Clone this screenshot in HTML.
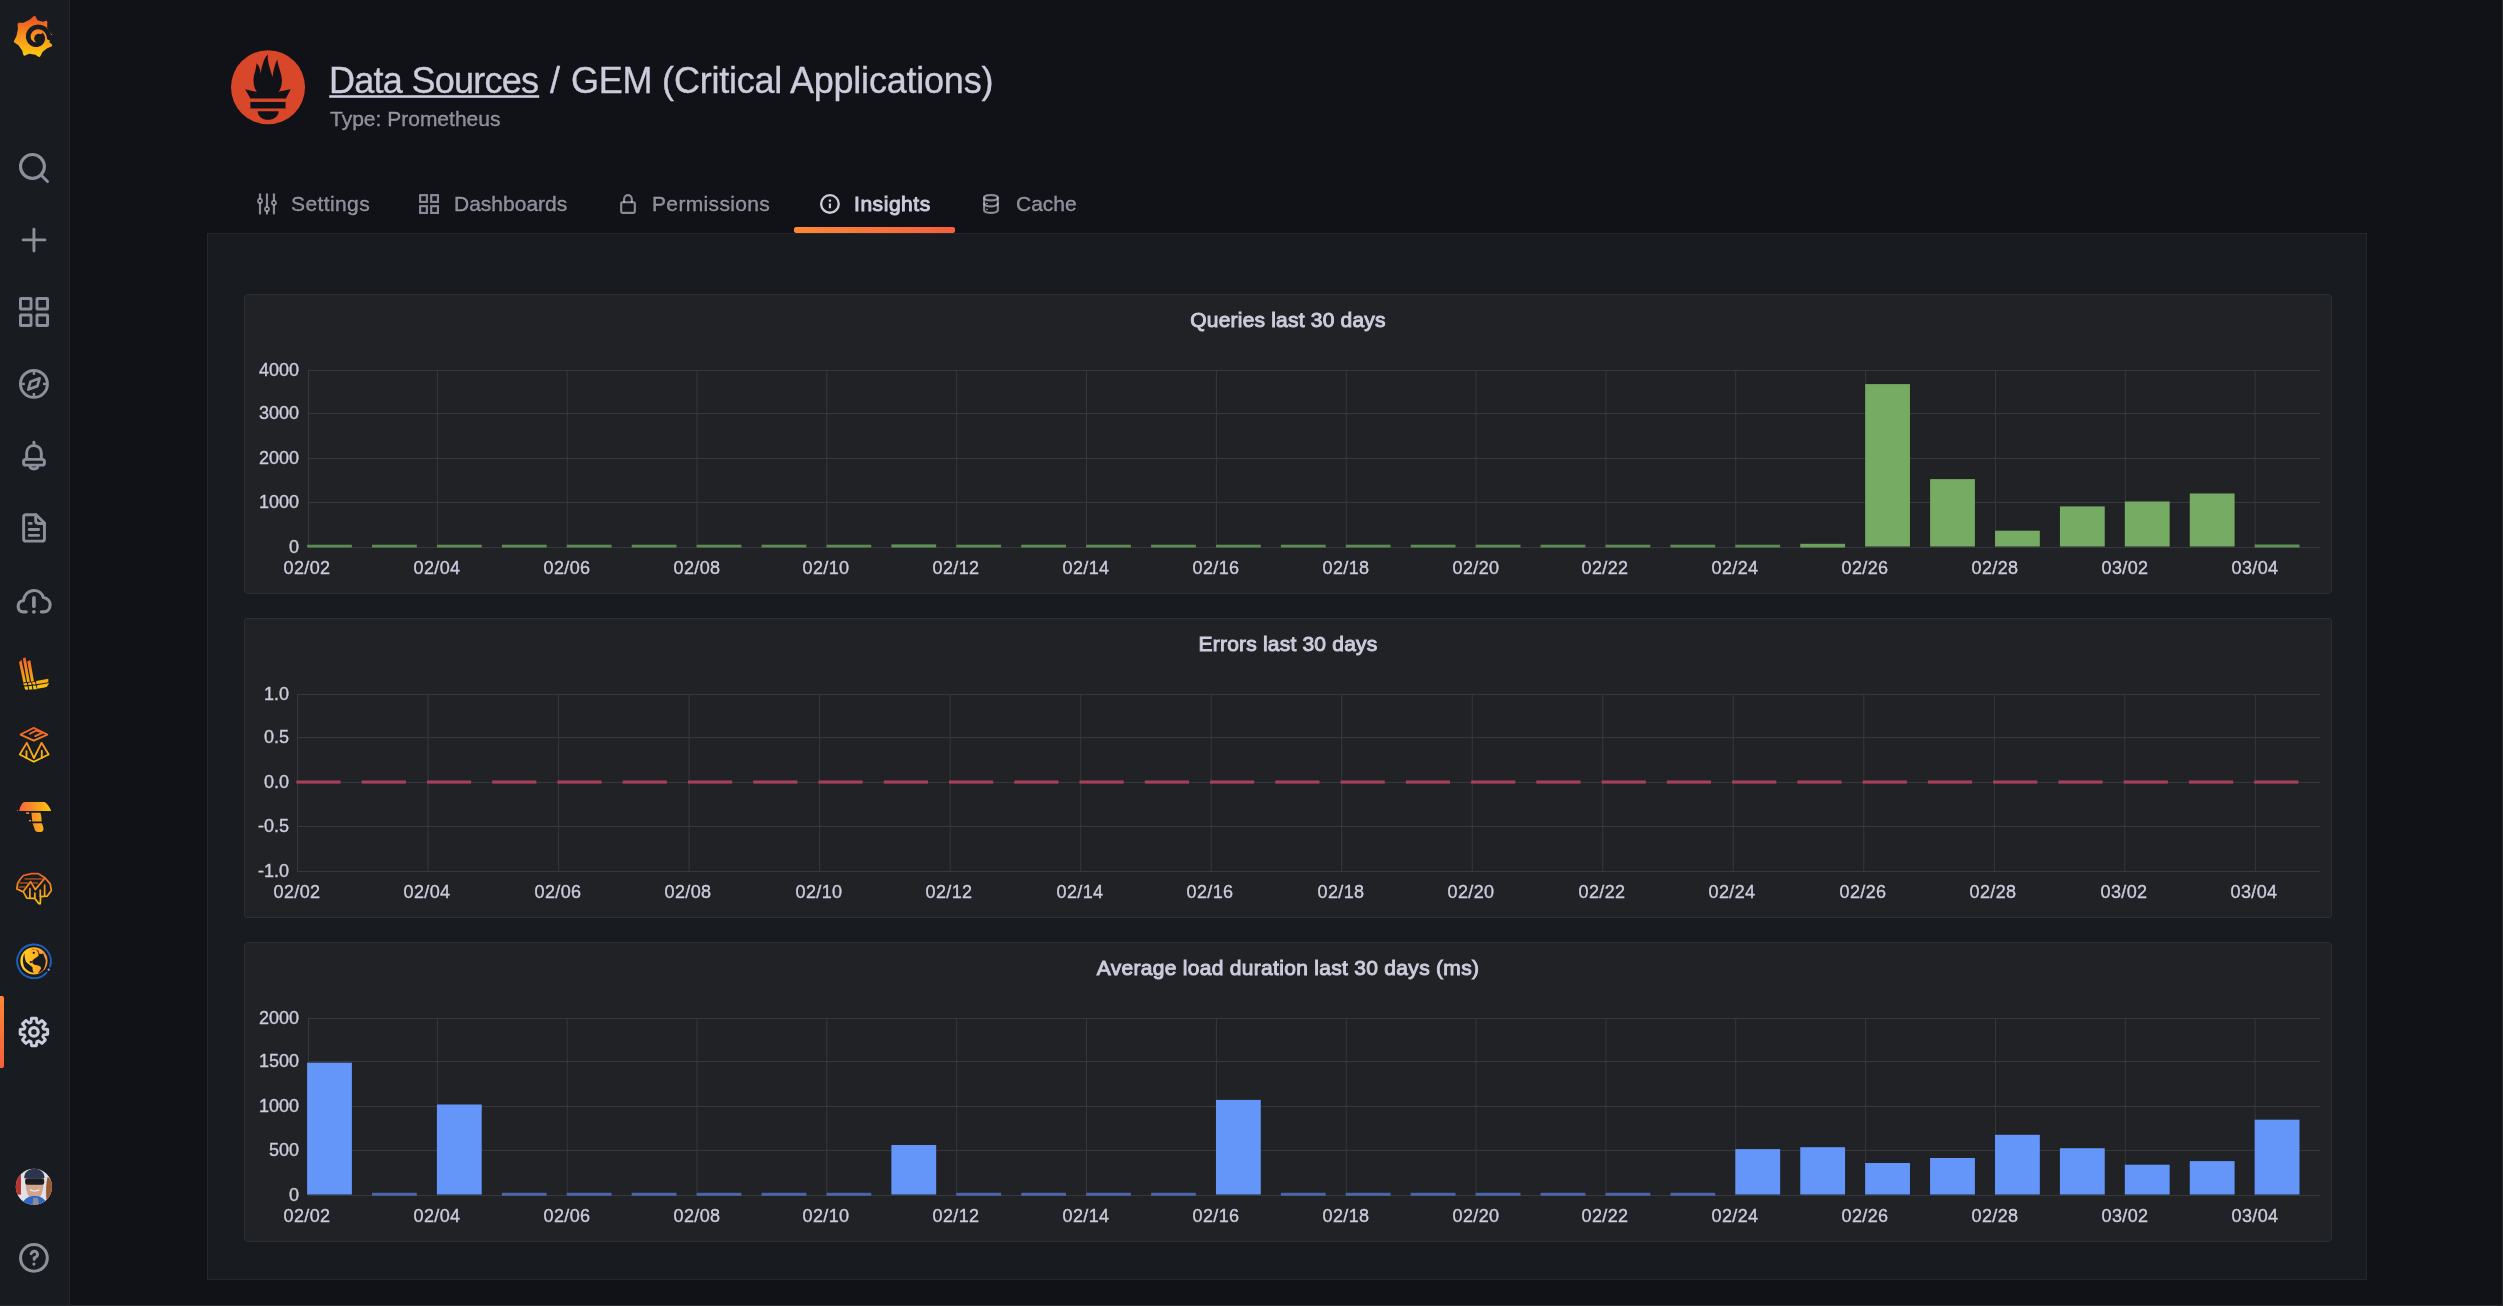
<!DOCTYPE html><html><head><meta charset="utf-8"><style>
html,body{margin:0;padding:0;}
body{width:2503px;height:1306px;overflow:hidden;background:#111217;position:relative;font-family:"Liberation Sans",sans-serif;}
.t{position:absolute;white-space:nowrap;will-change:transform;}
.r{position:absolute;}
svg{position:absolute;overflow:visible;}
</style></head><body>
<div class="r" style="left:2502px;top:0px;width:1px;height:1306px;background:#26282c;"></div>
<div class="r" style="left:0px;top:1305px;width:2503px;height:1px;background:#2a2c30;"></div>
<div class="r" style="left:0px;top:0px;width:69px;height:1305px;background:#181b1f;"></div>
<div class="r" style="left:69px;top:0px;width:1px;height:1305px;background:#24272b;"></div>
<div class="r" style="left:0px;top:996px;width:4px;height:72px;background:linear-gradient(180deg,#FF8833,#F55F3E);border-radius:0 2px 2px 0;"></div>
<svg style="left:10px;top:12px;" width="48" height="48" viewBox="0 0 1306 1306">
<defs><linearGradient id="glg" gradientUnits="userSpaceOnUse" x1="0" y1="1200" x2="0" y2="110">
<stop offset="0" stop-color="#FBCA0A"/><stop offset="0.5" stop-color="#F7921E"/><stop offset="1" stop-color="#EE4E24"/></linearGradient></defs>
<path fill="url(#glg)" stroke="url(#glg)" stroke-width="70" stroke-linejoin="round" d="M243 329 L394 319 L480 275 L567 232 L666 140 L723 251 L809 276 L895 304 L982 274 L974 431 L1013 500 L1051 571 L1130 652 L1067 681 L1051 759 L1034 837 L1113 906 L999 952 L930 1005 L861 1057 L794 1191 L703 1127 L611 1113 L520 1096 L396 1154 L364 1032 L306 952 L249 872 L139 803 L206 673 L227 576 L250 479 Z"/>
<path d="M1210 720 L1090 680 L1068 704 L1060 647 L1042 593 L1016 544 L982 501 L942 465 L897 438 L849 418 L798 408 L748 407 L699 415 L653 430 L611 454 L575 483 L545 518 L522 557 L506 598 L498 641 L498 684 L505 725 L519 763 L539 798 L565 827 L594 852 L627 870 L661 882 L696 888 L731 887 L764 880 L795 868 L823 851 L846 830 L864 806 L878 779 L886 752 L890 724 L888 697 L882 672 L871 649 L857 629 L840 612" fill="none" stroke="#181b1f" stroke-width="128" stroke-linejoin="round"/>
<circle cx="785" cy="722" r="128" fill="#181b1f"/>
<path d="M1040 600 L1200 655 L1185 775 L1080 770 Z" fill="#181b1f"/>
</svg>
<svg style="left:18px;top:152px;" width="32" height="32" viewBox="0 0 1306 1306"><g fill="none" stroke="#8e8f9b" stroke-linecap="round" stroke-linejoin="round"><circle cx="590" cy="590" r="487" stroke-width="128"/><line x1="960" y1="960" x2="1205" y2="1205" stroke-width="115"/></g></svg>
<svg style="left:18px;top:224px;" width="32" height="32" viewBox="0 0 1306 1306"><g fill="none" stroke="#8e8f9b" stroke-linecap="round" stroke-linejoin="round"><line x1="650" y1="210" x2="650" y2="1100" stroke-width="118"/><line x1="210" y1="650" x2="1100" y2="650" stroke-width="118"/></g></svg>
<svg style="left:18px;top:296px;" width="32" height="32" viewBox="0 0 1306 1306"><g fill="none" stroke="#8e8f9b" stroke-linecap="round" stroke-linejoin="round"><g stroke-width="118"><rect x="100" y="100" width="432" height="432" rx="25"/><rect x="774" y="100" width="432" height="432" rx="25"/><rect x="100" y="774" width="432" height="432" rx="25"/><rect x="774" y="774" width="432" height="432" rx="25"/></g></g></svg>
<svg style="left:18px;top:368px;" width="32" height="32" viewBox="0 0 1306 1306"><g fill="none" stroke="#8e8f9b" stroke-linecap="round" stroke-linejoin="round"><circle cx="650" cy="650" r="550" stroke-width="120"/><g stroke-width="100" stroke-linecap="butt"><line x1="650" y1="140" x2="650" y2="280"/><line x1="650" y1="1020" x2="650" y2="1160"/><line x1="140" y1="650" x2="280" y2="650"/><line x1="1020" y1="650" x2="1160" y2="650"/></g><path d="M880 420 L790 740 L420 880 L510 560 Z" stroke-width="110"/></g></svg>
<svg style="left:18px;top:440px;" width="32" height="32" viewBox="0 0 1306 1306"><g fill="none" stroke="#8e8f9b" stroke-linecap="round" stroke-linejoin="round"><g stroke-width="120"><line x1="650" y1="95" x2="650" y2="150"/><path d="M355 730 V520 C355 340 490 230 650 230 C810 230 950 340 950 520 V730"/><rect x="228" y="790" width="850" height="235" rx="90"/><path d="M480 1040 C490 1150 560 1185 650 1185 C740 1185 810 1150 820 1040"/></g></g></svg>
<svg style="left:18px;top:512px;" width="32" height="32" viewBox="0 0 1306 1306"><g fill="none" stroke="#8e8f9b" stroke-linecap="round" stroke-linejoin="round"><g stroke-width="118"><path d="M740 110 H330 C270 110 230 150 230 210 V1090 C230 1150 270 1190 330 1190 H980 C1040 1190 1080 1150 1080 1090 V450 Z"/><path d="M720 120 V350 C720 420 770 470 840 470 H1070"/><line x1="460" y1="465" x2="540" y2="465"/><line x1="460" y1="715" x2="840" y2="715"/><line x1="460" y1="955" x2="840" y2="955"/></g></g></svg>
<svg style="left:14px;top:582px;" width="40" height="40" viewBox="0 0 1306 1306"><g fill="none" stroke="#8e8f9b" stroke-linecap="round" stroke-linejoin="round"><g stroke-width="100"><path d="M400 975 H290 C190 965 135 880 135 780 C135 670 215 610 305 615 C325 430 465 275 650 275 C800 275 920 375 960 505 C1090 525 1180 625 1180 745 C1180 875 1090 975 960 975 H890"/><line x1="650" y1="520" x2="650" y2="790" stroke-width="120"/></g><circle cx="650" cy="975" r="62" fill="#8e8f9b" stroke="none"/></g></svg>
<svg style="left:10px;top:648px;" width="50" height="50" viewBox="0 0 1306 1306"><defs><linearGradient id="lk" gradientUnits="userSpaceOnUse" x1="0" y1="200" x2="0" y2="1100"><stop offset="0" stop-color="#F05A28"/><stop offset="1" stop-color="#FBCA0A"/></linearGradient></defs>
<g fill="url(#lk)">
<path d="M235 370 L300 310 L420 890 L348 900 Z"/>
<path d="M335 275 L405 240 L520 880 L447 890 Z"/>
<path d="M450 355 L530 315 L625 870 L553 880 Z"/>
<path d="M345 925 L655 880 L700 1075 L400 1090 Z"/>
<path d="M680 860 L1000 800 L1000 895 L690 950 Z"/>
<path d="M700 975 L1020 915 C990 990 960 1020 900 1035 L710 1065 Z"/>
</g>
<g stroke="#181b1f" stroke-width="28"><line x1="330" y1="995" x2="720" y2="960"/><line x1="455" y1="900" x2="490" y2="1100"/><line x1="565" y1="890" x2="600" y2="1090"/></g>
</svg>
<svg style="left:10px;top:720px;" width="50" height="50" viewBox="0 0 1306 1306"><defs><linearGradient id="mm" gradientUnits="userSpaceOnUse" x1="0" y1="200" x2="0" y2="1100"><stop offset="0" stop-color="#F05A28"/><stop offset="1" stop-color="#FBCA0A"/></linearGradient></defs>
<g fill="none" stroke="url(#mm)" stroke-width="48" stroke-linejoin="round" stroke-linecap="round">
<path d="M275 380 L620 205 L975 380 L620 540 Z"/>
<path d="M520 360 L690 275 L860 330 L660 420"/>
<path d="M255 900 L440 595 L625 995 L825 595 L1010 900 L620 1090 Z"/>
<line x1="430" y1="815" x2="430" y2="990"/><line x1="830" y1="800" x2="830" y2="985"/>
</g></svg>
<svg style="left:10px;top:792px;" width="50" height="50" viewBox="0 0 1306 1306"><defs><linearGradient id="tp" gradientUnits="userSpaceOnUse" x1="200" y1="0" x2="1080" y2="0"><stop offset="0" stop-color="#F55F3E"/><stop offset="1" stop-color="#FBCA0A"/></linearGradient></defs>
<g fill="url(#tp)">
<path d="M240 495 C255 390 320 260 385 260 L900 260 C960 280 1040 400 1075 495 Z"/>
<path d="M560 540 L790 540 C815 580 830 700 822 770 L580 770 Z"/>
<path d="M590 815 L830 815 C855 860 885 950 872 995 C860 1035 830 1048 780 1048 L720 1048 C660 1040 640 985 630 930 Z"/>
<rect x="420" y="530" width="80" height="42"/><rect x="495" y="730" width="55" height="38"/><circle cx="195" cy="485" r="16"/>
</g></svg>
<svg style="left:10px;top:864px;" width="50" height="50" viewBox="0 0 1306 1306"><defs><linearGradient id="br" gradientUnits="userSpaceOnUse" x1="0" y1="200" x2="0" y2="1100"><stop offset="0" stop-color="#F05A28"/><stop offset="1" stop-color="#FBCA0A"/></linearGradient></defs>
<g fill="none" stroke="url(#br)" stroke-width="45" stroke-linejoin="round" stroke-linecap="round">
<path d="M350 300 L560 250 L730 250 L910 360 L1050 520 L1080 690 L970 840 L800 850 L790 1040 L750 1030 L650 900 L440 890 L350 730 L180 650 L200 500 L280 380 Z"/>
<path d="M360 700 L540 460 L660 670 L910 370"/>
<line x1="520" y1="640" x2="520" y2="870"/><line x1="650" y1="760" x2="650" y2="880"/><line x1="790" y1="680" x2="790" y2="850"/><line x1="905" y1="550" x2="905" y2="820"/>
</g>
<g stroke="#B5561F" stroke-width="40" opacity="0.85"><line x1="380" y1="390" x2="860" y2="390"/><line x1="240" y1="495" x2="480" y2="495"/><line x1="580" y1="495" x2="730" y2="495"/><line x1="230" y1="600" x2="400" y2="600"/></g>
</svg>
<svg style="left:10px;top:936px;" width="50" height="50" viewBox="0 0 1306 1306"><defs><linearGradient id="gb" gradientUnits="userSpaceOnUse" x1="270" y1="0" x2="980" y2="0"><stop offset="0" stop-color="#FFD21A"/><stop offset="1" stop-color="#FF9428"/></linearGradient></defs>
<path d="M1045 800 A 440 440 0 1 0 955 955" fill="none" stroke="#1F60C4" stroke-width="48" stroke-linecap="round"/>
<circle cx="1010" cy="880" r="30" fill="#8AB8FF"/>
<circle cx="625" cy="650" r="355" fill="url(#gb)"/>
<g fill="#181b1f">
<path d="M380 460 C330 540 320 700 380 820 C440 900 540 950 620 960 C600 900 580 860 590 820 C560 780 470 740 420 680 C390 620 380 540 380 460 Z"/>
<path d="M550 350 C600 340 650 350 700 370 C740 420 760 480 740 520 C700 560 640 580 590 640 C560 700 600 740 680 760 C760 770 820 800 810 850 C790 900 760 940 730 960 C800 960 870 900 900 820 C930 740 940 660 930 620 C910 560 880 500 870 460 C840 470 800 480 760 460 C750 420 760 380 700 360 Z"/>
<circle cx="620" cy="440" r="30"/><circle cx="545" cy="680" r="30"/>
</g></svg>
<svg style="left:18px;top:1016px;" width="32" height="32" viewBox="0 0 1306 1306"><g fill="none" stroke="rgb(204,204,220)" stroke-linecap="round" stroke-linejoin="round"><path d="M530 258 L551 89 L749 89 L770 258 L842 288 L977 183 L1117 323 L1012 458 L1042 530 L1211 551 L1211 749 L1042 770 L1012 842 L1117 977 L977 1117 L842 1012 L770 1042 L749 1211 L551 1211 L530 1042 L458 1012 L323 1117 L183 977 L288 842 L258 770 L89 749 L89 551 L258 530 L288 458 L183 323 L323 183 L458 288 Z" stroke-width="120"/><circle cx="650" cy="650" r="175" stroke-width="130"/></g></svg>
<svg style="left:0px;top:1140px;" width="70" height="166" viewBox="0 0 551 1306">
<defs><clipPath id="avc"><circle cx="267" cy="368" r="143"/></clipPath></defs>
<g clip-path="url(#avc)">
<rect x="100" y="200" width="350" height="350" fill="#dfe2e6"/>
<rect x="110" y="260" width="55" height="170" fill="#b8322e"/>
<path d="M375 290 C395 300 420 330 415 380 L415 470 L365 470 C360 400 362 330 375 290 Z" fill="#9a5a34"/>
<path d="M190 300 C190 240 240 225 270 225 C310 225 350 245 350 300 Z" fill="#2c3550"/>
<path d="M200 300 C200 430 235 470 270 470 C310 470 345 430 345 300 Z" fill="#cfa58e"/>
<rect x="198" y="300" width="150" height="52" rx="18" fill="#1b1c20"/>
<path d="M235 390 C255 405 290 405 310 390" stroke="#ece6e2" stroke-width="10" fill="none"/>
<path d="M160 560 C165 470 220 440 270 440 C330 440 375 470 380 560 Z" fill="#2f66c8"/>
<path d="M262 455 L298 455 L310 520 L255 520 Z" fill="#8b8d95"/>
</g></svg>
<svg style="left:18px;top:1242px;" width="32" height="32" viewBox="0 0 1306 1306"><g fill="none" stroke="#8e8f9b" stroke-linecap="round" stroke-linejoin="round"><circle cx="650" cy="650" r="545" stroke-width="125"/><path d="M535 480 C565 410 615 375 665 375 C745 375 800 435 800 510 C800 590 730 625 660 650 V715" stroke-width="118"/><circle cx="650" cy="900" r="65" fill="#8e8f9b" stroke="none"/></g></svg>
<svg style="left:225px;top:45px;" width="85" height="85" viewBox="0 0 1306 1306">
<circle cx="661" cy="650" r="569" fill="#D9472B"/>
<g fill="#111217">
<path d="M310 680 C380 700 450 715 490 718 C430 640 425 520 460 420 C475 360 482 310 485 280 C525 320 548 385 545 450 C570 300 605 185 660 145 C645 250 700 380 730 495 C742 400 772 280 805 220 C805 320 880 440 875 560 C870 640 845 690 822 718 C880 705 950 690 1010 680 L935 822 L390 822 Z"/>
<rect x="390" y="875" width="540" height="100"/>
<path d="M500 1018 L825 1018 C820 1100 750 1150 662 1150 C575 1150 505 1100 500 1018 Z"/>
</g></svg>
<div class="t" style="left:328.5px;top:62.81px;font-size:36px;line-height:36px;color:rgb(204,204,220);-webkit-text-stroke:0.35px rgb(204,204,220);letter-spacing:-0.73px;">Data Sources</div>
<div class="t" style="left:549.5px;top:62.81px;font-size:36px;line-height:36px;color:rgb(204,204,220);-webkit-text-stroke:0.35px rgb(204,204,220);letter-spacing:0px;">/</div>
<div class="t" style="left:570.7px;top:62.81px;font-size:36px;line-height:36px;color:rgb(204,204,220);-webkit-text-stroke:0.35px rgb(204,204,220);letter-spacing:-0.22px;">GEM (Critical Applications)</div>
<svg style="left:0px;top:0px;" width="1100" height="200" viewBox="0 0 1100 200"><rect x="329.2" y="95.2" width="210" height="2.6" fill="rgb(204,204,220)"/></svg>
<div class="t" style="left:330px;top:108.21px;font-size:21px;line-height:21px;color:rgba(204,204,220,0.65);-webkit-text-stroke:0.3px rgba(204,204,220,0.65);letter-spacing:0px;">Type: Prometheus</div>
<svg style="left:254px;top:190px;" width="28" height="28" viewBox="0 0 1306 1306"><g fill="none" stroke="rgba(204,204,220,0.65)" stroke-linecap="round" stroke-linejoin="round"><g stroke-width="100"><line x1="280" y1="200" x2="280" y2="1100"/><line x1="605" y1="200" x2="605" y2="1100"/><line x1="930" y1="200" x2="930" y2="1100"/></g><g stroke-width="82" fill="#111217"><circle cx="280" cy="510" r="95"/><circle cx="605" cy="890" r="95"/><circle cx="930" cy="600" r="95"/></g></g></svg>
<div class="t" style="left:290.5px;top:193.21px;font-size:21px;line-height:21px;color:rgba(204,204,220,0.65);-webkit-text-stroke:0.3px rgba(204,204,220,0.65);letter-spacing:0.4px;">Settings</div>
<svg style="left:415px;top:190px;" width="28" height="28" viewBox="0 0 1306 1306"><g fill="none" stroke="rgba(204,204,220,0.65)" stroke-linecap="round" stroke-linejoin="round"><g stroke-width="100" stroke-linejoin="miter"><rect x="240" y="240" width="315" height="315"/><rect x="755" y="240" width="315" height="315"/><rect x="240" y="755" width="315" height="315"/><rect x="755" y="755" width="315" height="315"/></g></g></svg>
<div class="t" style="left:453.5px;top:193.21px;font-size:21px;line-height:21px;color:rgba(204,204,220,0.65);-webkit-text-stroke:0.3px rgba(204,204,220,0.65);letter-spacing:0px;">Dashboards</div>
<svg style="left:614px;top:190px;" width="28" height="28" viewBox="0 0 1306 1306"><g fill="none" stroke="rgba(204,204,220,0.65)" stroke-linecap="round" stroke-linejoin="round"><g stroke-width="98"><rect x="335" y="568" width="637" height="497" rx="60"/><path d="M470 560 V430 C470 310 560 238 650 238 C740 238 830 310 830 430 V560"/></g></g></svg>
<div class="t" style="left:652.3px;top:193.21px;font-size:21px;line-height:21px;color:rgba(204,204,220,0.65);-webkit-text-stroke:0.3px rgba(204,204,220,0.65);letter-spacing:0.35px;">Permissions</div>
<svg style="left:816px;top:190px;" width="28" height="28" viewBox="0 0 1306 1306"><g fill="none" stroke="rgb(204,204,220)" stroke-linecap="round" stroke-linejoin="round"><circle cx="650" cy="650" r="410" stroke-width="110"/><line x1="650" y1="680" x2="650" y2="800" stroke-width="100" stroke-linecap="square"/><rect x="598" y="448" width="104" height="104" rx="25" fill="rgb(204,204,220)" stroke="none"/></g></svg>
<div class="t" style="left:853.7px;top:193.21px;font-size:21px;line-height:21px;color:rgb(204,204,220);-webkit-text-stroke:0.95px rgb(204,204,220);letter-spacing:0.55px;">Insights</div>
<svg style="left:977px;top:190px;" width="28" height="28" viewBox="0 0 1306 1306"><g fill="none" stroke="rgba(204,204,220,0.65)" stroke-linecap="round" stroke-linejoin="round"><g stroke-width="98"><ellipse cx="650" cy="360" rx="320" ry="125"/><path d="M332 360 V960 C380 1030 500 1068 650 1068 C800 1068 920 1030 972 960 V360"/><path d="M332 640 C380 720 500 765 650 765 C800 765 920 720 972 640"/></g><g stroke-width="55"><line x1="445" y1="625" x2="485" y2="625"/><line x1="445" y1="905" x2="485" y2="905"/></g></g></svg>
<div class="t" style="left:1015.5px;top:193.21px;font-size:21px;line-height:21px;color:rgba(204,204,220,0.65);-webkit-text-stroke:0.3px rgba(204,204,220,0.65);letter-spacing:0px;">Cache</div>
<div class="r" style="left:794px;top:227px;width:161px;height:6px;background:linear-gradient(90deg,#FF8833,#F55F3E);border-radius:3px;"></div>
<div class="r" style="left:207px;top:233px;width:2160px;height:1047px;background:#181b1f;box-sizing:border-box;border:1px solid #24272b;"></div>
<div class="r" style="left:794px;top:227px;width:161px;height:6px;background:linear-gradient(90deg,#FF8833,#F55F3E);border-radius:3px;"></div>
<div class="r" style="left:244px;top:294px;width:2088px;height:300px;background:#202226;box-sizing:border-box;border:1px solid #2d2f34;border-radius:3px;"></div>
<div class="t" style="left:988px;width:600px;text-align:center;top:309.31px;font-size:21px;line-height:21px;color:rgb(204,204,220);-webkit-text-stroke:0.95px rgb(204,204,220);letter-spacing:0.2px;">Queries last 30 days</div>
<svg style="left:0;top:0" width="2503" height="1306" viewBox="0 0 2503 1306"><g shape-rendering="crispEdges"><rect x="308" y="370" width="2012" height="1" fill="#37383d"/><rect x="308" y="413" width="2012" height="1" fill="#37383d"/><rect x="308" y="458" width="2012" height="1" fill="#37383d"/><rect x="308" y="502" width="2012" height="1" fill="#37383d"/><rect x="308" y="547" width="2012" height="1" fill="#37383d"/></g><g><rect x="308.00" y="370" width="1" height="177" fill="#37383d"/><rect x="436.84" y="370" width="1" height="177" fill="#37383d"/><rect x="566.68" y="370" width="1" height="177" fill="#37383d"/><rect x="696.52" y="370" width="1" height="177" fill="#37383d"/><rect x="826.36" y="370" width="1" height="177" fill="#37383d"/><rect x="956.20" y="370" width="1" height="177" fill="#37383d"/><rect x="1086.04" y="370" width="1" height="177" fill="#37383d"/><rect x="1215.88" y="370" width="1" height="177" fill="#37383d"/><rect x="1345.72" y="370" width="1" height="177" fill="#37383d"/><rect x="1475.56" y="370" width="1" height="177" fill="#37383d"/><rect x="1605.40" y="370" width="1" height="177" fill="#37383d"/><rect x="1735.24" y="370" width="1" height="177" fill="#37383d"/><rect x="1865.08" y="370" width="1" height="177" fill="#37383d"/><rect x="1994.92" y="370" width="1" height="177" fill="#37383d"/><rect x="2124.76" y="370" width="1" height="177" fill="#37383d"/><rect x="2254.60" y="370" width="1" height="177" fill="#37383d"/><rect x="307.10" y="544.70" width="44.8" height="2.80" fill="#5c8a53"/><rect x="372.02" y="544.70" width="44.8" height="2.80" fill="#5c8a53"/><rect x="436.94" y="544.70" width="44.8" height="2.80" fill="#5c8a53"/><rect x="501.86" y="544.70" width="44.8" height="2.80" fill="#5c8a53"/><rect x="566.78" y="544.70" width="44.8" height="2.80" fill="#5c8a53"/><rect x="631.70" y="544.70" width="44.8" height="2.80" fill="#5c8a53"/><rect x="696.62" y="544.70" width="44.8" height="2.80" fill="#5c8a53"/><rect x="761.54" y="544.70" width="44.8" height="2.80" fill="#5c8a53"/><rect x="826.46" y="544.70" width="44.8" height="2.80" fill="#5c8a53"/><rect x="891.38" y="544.40" width="44.8" height="3.10" fill="#5f9056"/><rect x="956.30" y="544.70" width="44.8" height="2.80" fill="#5c8a53"/><rect x="1021.22" y="544.70" width="44.8" height="2.80" fill="#5c8a53"/><rect x="1086.14" y="544.70" width="44.8" height="2.80" fill="#5c8a53"/><rect x="1151.06" y="544.70" width="44.8" height="2.80" fill="#5c8a53"/><rect x="1215.98" y="544.70" width="44.8" height="2.80" fill="#5c8a53"/><rect x="1280.90" y="544.70" width="44.8" height="2.80" fill="#5c8a53"/><rect x="1345.82" y="544.70" width="44.8" height="2.80" fill="#5c8a53"/><rect x="1410.74" y="544.70" width="44.8" height="2.80" fill="#5c8a53"/><rect x="1475.66" y="544.70" width="44.8" height="2.80" fill="#5c8a53"/><rect x="1540.58" y="544.70" width="44.8" height="2.80" fill="#5c8a53"/><rect x="1605.50" y="544.70" width="44.8" height="2.80" fill="#5c8a53"/><rect x="1670.42" y="544.70" width="44.8" height="2.80" fill="#5c8a53"/><rect x="1735.34" y="544.70" width="44.8" height="2.80" fill="#5c8a53"/><rect x="1800.26" y="543.80" width="44.8" height="3.70" fill="#6c9f5e"/><rect x="1865.18" y="384.10" width="44.8" height="162.40" fill="#76AB64"/><rect x="1930.10" y="479.10" width="44.8" height="67.40" fill="#76AB64"/><rect x="1995.02" y="530.70" width="44.8" height="15.80" fill="#76AB64"/><rect x="2059.94" y="506.40" width="44.8" height="40.10" fill="#76AB64"/><rect x="2124.86" y="501.50" width="44.8" height="45.00" fill="#76AB64"/><rect x="2189.78" y="493.50" width="44.8" height="53.00" fill="#76AB64"/><rect x="2254.70" y="544.50" width="44.8" height="3.00" fill="#5f9056"/></g></svg>
<div class="t" style="right:2203.9px;text-align:right;top:361.15px;font-size:18px;line-height:18px;color:rgb(204,204,220);-webkit-text-stroke:0.35px rgb(204,204,220);letter-spacing:0px;">4000</div>
<div class="t" style="right:2203.9px;text-align:right;top:404.15px;font-size:18px;line-height:18px;color:rgb(204,204,220);-webkit-text-stroke:0.35px rgb(204,204,220);letter-spacing:0px;">3000</div>
<div class="t" style="right:2203.9px;text-align:right;top:449.15px;font-size:18px;line-height:18px;color:rgb(204,204,220);-webkit-text-stroke:0.35px rgb(204,204,220);letter-spacing:0px;">2000</div>
<div class="t" style="right:2203.9px;text-align:right;top:493.15px;font-size:18px;line-height:18px;color:rgb(204,204,220);-webkit-text-stroke:0.35px rgb(204,204,220);letter-spacing:0px;">1000</div>
<div class="t" style="right:2203.9px;text-align:right;top:538.15px;font-size:18px;line-height:18px;color:rgb(204,204,220);-webkit-text-stroke:0.35px rgb(204,204,220);letter-spacing:0px;">0</div>
<div class="t" style="left:7.0px;width:600px;text-align:center;top:559.05px;font-size:18px;line-height:18px;color:rgb(204,204,220);-webkit-text-stroke:0.35px rgb(204,204,220);letter-spacing:0.4px;">02/02</div>
<div class="t" style="left:136.84000000000003px;width:600px;text-align:center;top:559.05px;font-size:18px;line-height:18px;color:rgb(204,204,220);-webkit-text-stroke:0.35px rgb(204,204,220);letter-spacing:0.4px;">02/04</div>
<div class="t" style="left:266.68000000000006px;width:600px;text-align:center;top:559.05px;font-size:18px;line-height:18px;color:rgb(204,204,220);-webkit-text-stroke:0.35px rgb(204,204,220);letter-spacing:0.4px;">02/06</div>
<div class="t" style="left:396.52px;width:600px;text-align:center;top:559.05px;font-size:18px;line-height:18px;color:rgb(204,204,220);-webkit-text-stroke:0.35px rgb(204,204,220);letter-spacing:0.4px;">02/08</div>
<div class="t" style="left:526.36px;width:600px;text-align:center;top:559.05px;font-size:18px;line-height:18px;color:rgb(204,204,220);-webkit-text-stroke:0.35px rgb(204,204,220);letter-spacing:0.4px;">02/10</div>
<div class="t" style="left:656.2px;width:600px;text-align:center;top:559.05px;font-size:18px;line-height:18px;color:rgb(204,204,220);-webkit-text-stroke:0.35px rgb(204,204,220);letter-spacing:0.4px;">02/12</div>
<div class="t" style="left:786.04px;width:600px;text-align:center;top:559.05px;font-size:18px;line-height:18px;color:rgb(204,204,220);-webkit-text-stroke:0.35px rgb(204,204,220);letter-spacing:0.4px;">02/14</div>
<div class="t" style="left:915.8800000000001px;width:600px;text-align:center;top:559.05px;font-size:18px;line-height:18px;color:rgb(204,204,220);-webkit-text-stroke:0.35px rgb(204,204,220);letter-spacing:0.4px;">02/16</div>
<div class="t" style="left:1045.72px;width:600px;text-align:center;top:559.05px;font-size:18px;line-height:18px;color:rgb(204,204,220);-webkit-text-stroke:0.35px rgb(204,204,220);letter-spacing:0.4px;">02/18</div>
<div class="t" style="left:1175.56px;width:600px;text-align:center;top:559.05px;font-size:18px;line-height:18px;color:rgb(204,204,220);-webkit-text-stroke:0.35px rgb(204,204,220);letter-spacing:0.4px;">02/20</div>
<div class="t" style="left:1305.4px;width:600px;text-align:center;top:559.05px;font-size:18px;line-height:18px;color:rgb(204,204,220);-webkit-text-stroke:0.35px rgb(204,204,220);letter-spacing:0.4px;">02/22</div>
<div class="t" style="left:1435.24px;width:600px;text-align:center;top:559.05px;font-size:18px;line-height:18px;color:rgb(204,204,220);-webkit-text-stroke:0.35px rgb(204,204,220);letter-spacing:0.4px;">02/24</div>
<div class="t" style="left:1565.08px;width:600px;text-align:center;top:559.05px;font-size:18px;line-height:18px;color:rgb(204,204,220);-webkit-text-stroke:0.35px rgb(204,204,220);letter-spacing:0.4px;">02/26</div>
<div class="t" style="left:1694.92px;width:600px;text-align:center;top:559.05px;font-size:18px;line-height:18px;color:rgb(204,204,220);-webkit-text-stroke:0.35px rgb(204,204,220);letter-spacing:0.4px;">02/28</div>
<div class="t" style="left:1824.7600000000002px;width:600px;text-align:center;top:559.05px;font-size:18px;line-height:18px;color:rgb(204,204,220);-webkit-text-stroke:0.35px rgb(204,204,220);letter-spacing:0.4px;">03/02</div>
<div class="t" style="left:1954.6000000000004px;width:600px;text-align:center;top:559.05px;font-size:18px;line-height:18px;color:rgb(204,204,220);-webkit-text-stroke:0.35px rgb(204,204,220);letter-spacing:0.4px;">03/04</div>
<div class="r" style="left:244px;top:618px;width:2088px;height:300px;background:#202226;box-sizing:border-box;border:1px solid #2d2f34;border-radius:3px;"></div>
<div class="t" style="left:988px;width:600px;text-align:center;top:633.31px;font-size:21px;line-height:21px;color:rgb(204,204,220);-webkit-text-stroke:0.95px rgb(204,204,220);letter-spacing:0.2px;">Errors last 30 days</div>
<svg style="left:0;top:0" width="2503" height="1306" viewBox="0 0 2503 1306"><g shape-rendering="crispEdges"><rect x="297" y="694" width="2023" height="1" fill="#37383d"/><rect x="297" y="737" width="2023" height="1" fill="#37383d"/><rect x="297" y="782" width="2023" height="1" fill="#37383d"/><rect x="297" y="826" width="2023" height="1" fill="#37383d"/><rect x="297" y="871" width="2023" height="1" fill="#37383d"/></g><g><rect x="297.00" y="694" width="1" height="177" fill="#37383d"/><rect x="427.57" y="694" width="1" height="177" fill="#37383d"/><rect x="558.09" y="694" width="1" height="177" fill="#37383d"/><rect x="688.61" y="694" width="1" height="177" fill="#37383d"/><rect x="819.13" y="694" width="1" height="177" fill="#37383d"/><rect x="949.65" y="694" width="1" height="177" fill="#37383d"/><rect x="1080.17" y="694" width="1" height="177" fill="#37383d"/><rect x="1210.69" y="694" width="1" height="177" fill="#37383d"/><rect x="1341.21" y="694" width="1" height="177" fill="#37383d"/><rect x="1471.73" y="694" width="1" height="177" fill="#37383d"/><rect x="1602.25" y="694" width="1" height="177" fill="#37383d"/><rect x="1732.77" y="694" width="1" height="177" fill="#37383d"/><rect x="1863.29" y="694" width="1" height="177" fill="#37383d"/><rect x="1993.81" y="694" width="1" height="177" fill="#37383d"/><rect x="2124.33" y="694" width="1" height="177" fill="#37383d"/><rect x="2254.85" y="694" width="1" height="177" fill="#37383d"/><rect x="296.40" y="780.50" width="44.2" height="3.10" fill="#A8405C"/><rect x="361.66" y="780.50" width="44.2" height="3.10" fill="#A8405C"/><rect x="426.92" y="780.50" width="44.2" height="3.10" fill="#A8405C"/><rect x="492.18" y="780.50" width="44.2" height="3.10" fill="#A8405C"/><rect x="557.44" y="780.50" width="44.2" height="3.10" fill="#A8405C"/><rect x="622.70" y="780.50" width="44.2" height="3.10" fill="#A8405C"/><rect x="687.96" y="780.50" width="44.2" height="3.10" fill="#A8405C"/><rect x="753.22" y="780.50" width="44.2" height="3.10" fill="#A8405C"/><rect x="818.48" y="780.50" width="44.2" height="3.10" fill="#A8405C"/><rect x="883.74" y="780.50" width="44.2" height="3.10" fill="#A8405C"/><rect x="949.00" y="780.50" width="44.2" height="3.10" fill="#A8405C"/><rect x="1014.26" y="780.50" width="44.2" height="3.10" fill="#A8405C"/><rect x="1079.52" y="780.50" width="44.2" height="3.10" fill="#A8405C"/><rect x="1144.78" y="780.50" width="44.2" height="3.10" fill="#A8405C"/><rect x="1210.04" y="780.50" width="44.2" height="3.10" fill="#A8405C"/><rect x="1275.30" y="780.50" width="44.2" height="3.10" fill="#A8405C"/><rect x="1340.56" y="780.50" width="44.2" height="3.10" fill="#A8405C"/><rect x="1405.82" y="780.50" width="44.2" height="3.10" fill="#A8405C"/><rect x="1471.08" y="780.50" width="44.2" height="3.10" fill="#A8405C"/><rect x="1536.34" y="780.50" width="44.2" height="3.10" fill="#A8405C"/><rect x="1601.60" y="780.50" width="44.2" height="3.10" fill="#A8405C"/><rect x="1666.86" y="780.50" width="44.2" height="3.10" fill="#A8405C"/><rect x="1732.12" y="780.50" width="44.2" height="3.10" fill="#A8405C"/><rect x="1797.38" y="780.50" width="44.2" height="3.10" fill="#A8405C"/><rect x="1862.64" y="780.50" width="44.2" height="3.10" fill="#A8405C"/><rect x="1927.90" y="780.50" width="44.2" height="3.10" fill="#A8405C"/><rect x="1993.16" y="780.50" width="44.2" height="3.10" fill="#A8405C"/><rect x="2058.42" y="780.50" width="44.2" height="3.10" fill="#A8405C"/><rect x="2123.68" y="780.50" width="44.2" height="3.10" fill="#A8405C"/><rect x="2188.94" y="780.50" width="44.2" height="3.10" fill="#A8405C"/><rect x="2254.20" y="780.50" width="44.2" height="3.10" fill="#A8405C"/></g></svg>
<div class="t" style="right:2214.3px;text-align:right;top:685.15px;font-size:18px;line-height:18px;color:rgb(204,204,220);-webkit-text-stroke:0.35px rgb(204,204,220);letter-spacing:0px;">1.0</div>
<div class="t" style="right:2214.3px;text-align:right;top:728.15px;font-size:18px;line-height:18px;color:rgb(204,204,220);-webkit-text-stroke:0.35px rgb(204,204,220);letter-spacing:0px;">0.5</div>
<div class="t" style="right:2214.3px;text-align:right;top:773.15px;font-size:18px;line-height:18px;color:rgb(204,204,220);-webkit-text-stroke:0.35px rgb(204,204,220);letter-spacing:0px;">0.0</div>
<div class="t" style="right:2214.3px;text-align:right;top:817.15px;font-size:18px;line-height:18px;color:rgb(204,204,220);-webkit-text-stroke:0.35px rgb(204,204,220);letter-spacing:0px;">-0.5</div>
<div class="t" style="right:2214.3px;text-align:right;top:862.15px;font-size:18px;line-height:18px;color:rgb(204,204,220);-webkit-text-stroke:0.35px rgb(204,204,220);letter-spacing:0px;">-1.0</div>
<div class="t" style="left:-3.3999999999999773px;width:600px;text-align:center;top:883.05px;font-size:18px;line-height:18px;color:rgb(204,204,220);-webkit-text-stroke:0.35px rgb(204,204,220);letter-spacing:0.4px;">02/02</div>
<div class="t" style="left:127.12px;width:600px;text-align:center;top:883.05px;font-size:18px;line-height:18px;color:rgb(204,204,220);-webkit-text-stroke:0.35px rgb(204,204,220);letter-spacing:0.4px;">02/04</div>
<div class="t" style="left:257.6400000000001px;width:600px;text-align:center;top:883.05px;font-size:18px;line-height:18px;color:rgb(204,204,220);-webkit-text-stroke:0.35px rgb(204,204,220);letter-spacing:0.4px;">02/06</div>
<div class="t" style="left:388.1600000000001px;width:600px;text-align:center;top:883.05px;font-size:18px;line-height:18px;color:rgb(204,204,220);-webkit-text-stroke:0.35px rgb(204,204,220);letter-spacing:0.4px;">02/08</div>
<div class="t" style="left:518.6800000000001px;width:600px;text-align:center;top:883.05px;font-size:18px;line-height:18px;color:rgb(204,204,220);-webkit-text-stroke:0.35px rgb(204,204,220);letter-spacing:0.4px;">02/10</div>
<div class="t" style="left:649.2px;width:600px;text-align:center;top:883.05px;font-size:18px;line-height:18px;color:rgb(204,204,220);-webkit-text-stroke:0.35px rgb(204,204,220);letter-spacing:0.4px;">02/12</div>
<div class="t" style="left:779.7200000000003px;width:600px;text-align:center;top:883.05px;font-size:18px;line-height:18px;color:rgb(204,204,220);-webkit-text-stroke:0.35px rgb(204,204,220);letter-spacing:0.4px;">02/14</div>
<div class="t" style="left:910.2400000000002px;width:600px;text-align:center;top:883.05px;font-size:18px;line-height:18px;color:rgb(204,204,220);-webkit-text-stroke:0.35px rgb(204,204,220);letter-spacing:0.4px;">02/16</div>
<div class="t" style="left:1040.7600000000002px;width:600px;text-align:center;top:883.05px;font-size:18px;line-height:18px;color:rgb(204,204,220);-webkit-text-stroke:0.35px rgb(204,204,220);letter-spacing:0.4px;">02/18</div>
<div class="t" style="left:1171.2800000000002px;width:600px;text-align:center;top:883.05px;font-size:18px;line-height:18px;color:rgb(204,204,220);-webkit-text-stroke:0.35px rgb(204,204,220);letter-spacing:0.4px;">02/20</div>
<div class="t" style="left:1301.8000000000002px;width:600px;text-align:center;top:883.05px;font-size:18px;line-height:18px;color:rgb(204,204,220);-webkit-text-stroke:0.35px rgb(204,204,220);letter-spacing:0.4px;">02/22</div>
<div class="t" style="left:1432.3200000000002px;width:600px;text-align:center;top:883.05px;font-size:18px;line-height:18px;color:rgb(204,204,220);-webkit-text-stroke:0.35px rgb(204,204,220);letter-spacing:0.4px;">02/24</div>
<div class="t" style="left:1562.8400000000001px;width:600px;text-align:center;top:883.05px;font-size:18px;line-height:18px;color:rgb(204,204,220);-webkit-text-stroke:0.35px rgb(204,204,220);letter-spacing:0.4px;">02/26</div>
<div class="t" style="left:1693.3600000000001px;width:600px;text-align:center;top:883.05px;font-size:18px;line-height:18px;color:rgb(204,204,220);-webkit-text-stroke:0.35px rgb(204,204,220);letter-spacing:0.4px;">02/28</div>
<div class="t" style="left:1823.88px;width:600px;text-align:center;top:883.05px;font-size:18px;line-height:18px;color:rgb(204,204,220);-webkit-text-stroke:0.35px rgb(204,204,220);letter-spacing:0.4px;">03/02</div>
<div class="t" style="left:1954.4px;width:600px;text-align:center;top:883.05px;font-size:18px;line-height:18px;color:rgb(204,204,220);-webkit-text-stroke:0.35px rgb(204,204,220);letter-spacing:0.4px;">03/04</div>
<div class="r" style="left:244px;top:942px;width:2088px;height:300px;background:#202226;box-sizing:border-box;border:1px solid #2d2f34;border-radius:3px;"></div>
<div class="t" style="left:988px;width:600px;text-align:center;top:957.31px;font-size:21px;line-height:21px;color:rgb(204,204,220);-webkit-text-stroke:0.95px rgb(204,204,220);letter-spacing:0.3px;">Average load duration last 30 days (ms)</div>
<svg style="left:0;top:0" width="2503" height="1306" viewBox="0 0 2503 1306"><g shape-rendering="crispEdges"><rect x="308" y="1018" width="2012" height="1" fill="#37383d"/><rect x="308" y="1061" width="2012" height="1" fill="#37383d"/><rect x="308" y="1106" width="2012" height="1" fill="#37383d"/><rect x="308" y="1150" width="2012" height="1" fill="#37383d"/><rect x="308" y="1195" width="2012" height="1" fill="#37383d"/></g><g><rect x="308.00" y="1018" width="1" height="177" fill="#37383d"/><rect x="436.84" y="1018" width="1" height="177" fill="#37383d"/><rect x="566.68" y="1018" width="1" height="177" fill="#37383d"/><rect x="696.52" y="1018" width="1" height="177" fill="#37383d"/><rect x="826.36" y="1018" width="1" height="177" fill="#37383d"/><rect x="956.20" y="1018" width="1" height="177" fill="#37383d"/><rect x="1086.04" y="1018" width="1" height="177" fill="#37383d"/><rect x="1215.88" y="1018" width="1" height="177" fill="#37383d"/><rect x="1345.72" y="1018" width="1" height="177" fill="#37383d"/><rect x="1475.56" y="1018" width="1" height="177" fill="#37383d"/><rect x="1605.40" y="1018" width="1" height="177" fill="#37383d"/><rect x="1735.24" y="1018" width="1" height="177" fill="#37383d"/><rect x="1865.08" y="1018" width="1" height="177" fill="#37383d"/><rect x="1994.92" y="1018" width="1" height="177" fill="#37383d"/><rect x="2124.76" y="1018" width="1" height="177" fill="#37383d"/><rect x="2254.60" y="1018" width="1" height="177" fill="#37383d"/><rect x="307.10" y="1062.70" width="44.8" height="131.80" fill="#6496FA"/><rect x="372.02" y="1192.80" width="44.8" height="3.00" fill="#4a66a8"/><rect x="436.94" y="1104.50" width="44.8" height="90.00" fill="#6496FA"/><rect x="501.86" y="1192.80" width="44.8" height="3.00" fill="#4a66a8"/><rect x="566.78" y="1192.80" width="44.8" height="3.00" fill="#4a66a8"/><rect x="631.70" y="1192.80" width="44.8" height="3.00" fill="#4a66a8"/><rect x="696.62" y="1192.80" width="44.8" height="3.00" fill="#4a66a8"/><rect x="761.54" y="1192.80" width="44.8" height="3.00" fill="#4a66a8"/><rect x="826.46" y="1192.80" width="44.8" height="3.00" fill="#4a66a8"/><rect x="891.38" y="1145.00" width="44.8" height="49.50" fill="#6496FA"/><rect x="956.30" y="1192.80" width="44.8" height="3.00" fill="#4a66a8"/><rect x="1021.22" y="1192.80" width="44.8" height="3.00" fill="#4a66a8"/><rect x="1086.14" y="1192.80" width="44.8" height="3.00" fill="#4a66a8"/><rect x="1151.06" y="1192.80" width="44.8" height="3.00" fill="#4a66a8"/><rect x="1215.98" y="1099.90" width="44.8" height="94.60" fill="#6496FA"/><rect x="1280.90" y="1192.80" width="44.8" height="3.00" fill="#4a66a8"/><rect x="1345.82" y="1192.80" width="44.8" height="3.00" fill="#4a66a8"/><rect x="1410.74" y="1192.80" width="44.8" height="3.00" fill="#4a66a8"/><rect x="1475.66" y="1192.80" width="44.8" height="3.00" fill="#4a66a8"/><rect x="1540.58" y="1192.80" width="44.8" height="3.00" fill="#4a66a8"/><rect x="1605.50" y="1192.80" width="44.8" height="3.00" fill="#4a66a8"/><rect x="1670.42" y="1192.80" width="44.8" height="3.00" fill="#4a66a8"/><rect x="1735.34" y="1149.10" width="44.8" height="45.40" fill="#6496FA"/><rect x="1800.26" y="1147.20" width="44.8" height="47.30" fill="#6496FA"/><rect x="1865.18" y="1163.00" width="44.8" height="31.50" fill="#6496FA"/><rect x="1930.10" y="1158.00" width="44.8" height="36.50" fill="#6496FA"/><rect x="1995.02" y="1134.80" width="44.8" height="59.70" fill="#6496FA"/><rect x="2059.94" y="1148.20" width="44.8" height="46.30" fill="#6496FA"/><rect x="2124.86" y="1164.70" width="44.8" height="29.80" fill="#6496FA"/><rect x="2189.78" y="1161.10" width="44.8" height="33.40" fill="#6496FA"/><rect x="2254.70" y="1119.70" width="44.8" height="74.80" fill="#6496FA"/></g></svg>
<div class="t" style="right:2203.9px;text-align:right;top:1009.15px;font-size:18px;line-height:18px;color:rgb(204,204,220);-webkit-text-stroke:0.35px rgb(204,204,220);letter-spacing:0px;">2000</div>
<div class="t" style="right:2203.9px;text-align:right;top:1052.15px;font-size:18px;line-height:18px;color:rgb(204,204,220);-webkit-text-stroke:0.35px rgb(204,204,220);letter-spacing:0px;">1500</div>
<div class="t" style="right:2203.9px;text-align:right;top:1097.15px;font-size:18px;line-height:18px;color:rgb(204,204,220);-webkit-text-stroke:0.35px rgb(204,204,220);letter-spacing:0px;">1000</div>
<div class="t" style="right:2203.9px;text-align:right;top:1141.15px;font-size:18px;line-height:18px;color:rgb(204,204,220);-webkit-text-stroke:0.35px rgb(204,204,220);letter-spacing:0px;">500</div>
<div class="t" style="right:2203.9px;text-align:right;top:1186.15px;font-size:18px;line-height:18px;color:rgb(204,204,220);-webkit-text-stroke:0.35px rgb(204,204,220);letter-spacing:0px;">0</div>
<div class="t" style="left:7.0px;width:600px;text-align:center;top:1207.05px;font-size:18px;line-height:18px;color:rgb(204,204,220);-webkit-text-stroke:0.35px rgb(204,204,220);letter-spacing:0.4px;">02/02</div>
<div class="t" style="left:136.84000000000003px;width:600px;text-align:center;top:1207.05px;font-size:18px;line-height:18px;color:rgb(204,204,220);-webkit-text-stroke:0.35px rgb(204,204,220);letter-spacing:0.4px;">02/04</div>
<div class="t" style="left:266.68000000000006px;width:600px;text-align:center;top:1207.05px;font-size:18px;line-height:18px;color:rgb(204,204,220);-webkit-text-stroke:0.35px rgb(204,204,220);letter-spacing:0.4px;">02/06</div>
<div class="t" style="left:396.52px;width:600px;text-align:center;top:1207.05px;font-size:18px;line-height:18px;color:rgb(204,204,220);-webkit-text-stroke:0.35px rgb(204,204,220);letter-spacing:0.4px;">02/08</div>
<div class="t" style="left:526.36px;width:600px;text-align:center;top:1207.05px;font-size:18px;line-height:18px;color:rgb(204,204,220);-webkit-text-stroke:0.35px rgb(204,204,220);letter-spacing:0.4px;">02/10</div>
<div class="t" style="left:656.2px;width:600px;text-align:center;top:1207.05px;font-size:18px;line-height:18px;color:rgb(204,204,220);-webkit-text-stroke:0.35px rgb(204,204,220);letter-spacing:0.4px;">02/12</div>
<div class="t" style="left:786.04px;width:600px;text-align:center;top:1207.05px;font-size:18px;line-height:18px;color:rgb(204,204,220);-webkit-text-stroke:0.35px rgb(204,204,220);letter-spacing:0.4px;">02/14</div>
<div class="t" style="left:915.8800000000001px;width:600px;text-align:center;top:1207.05px;font-size:18px;line-height:18px;color:rgb(204,204,220);-webkit-text-stroke:0.35px rgb(204,204,220);letter-spacing:0.4px;">02/16</div>
<div class="t" style="left:1045.72px;width:600px;text-align:center;top:1207.05px;font-size:18px;line-height:18px;color:rgb(204,204,220);-webkit-text-stroke:0.35px rgb(204,204,220);letter-spacing:0.4px;">02/18</div>
<div class="t" style="left:1175.56px;width:600px;text-align:center;top:1207.05px;font-size:18px;line-height:18px;color:rgb(204,204,220);-webkit-text-stroke:0.35px rgb(204,204,220);letter-spacing:0.4px;">02/20</div>
<div class="t" style="left:1305.4px;width:600px;text-align:center;top:1207.05px;font-size:18px;line-height:18px;color:rgb(204,204,220);-webkit-text-stroke:0.35px rgb(204,204,220);letter-spacing:0.4px;">02/22</div>
<div class="t" style="left:1435.24px;width:600px;text-align:center;top:1207.05px;font-size:18px;line-height:18px;color:rgb(204,204,220);-webkit-text-stroke:0.35px rgb(204,204,220);letter-spacing:0.4px;">02/24</div>
<div class="t" style="left:1565.08px;width:600px;text-align:center;top:1207.05px;font-size:18px;line-height:18px;color:rgb(204,204,220);-webkit-text-stroke:0.35px rgb(204,204,220);letter-spacing:0.4px;">02/26</div>
<div class="t" style="left:1694.92px;width:600px;text-align:center;top:1207.05px;font-size:18px;line-height:18px;color:rgb(204,204,220);-webkit-text-stroke:0.35px rgb(204,204,220);letter-spacing:0.4px;">02/28</div>
<div class="t" style="left:1824.7600000000002px;width:600px;text-align:center;top:1207.05px;font-size:18px;line-height:18px;color:rgb(204,204,220);-webkit-text-stroke:0.35px rgb(204,204,220);letter-spacing:0.4px;">03/02</div>
<div class="t" style="left:1954.6000000000004px;width:600px;text-align:center;top:1207.05px;font-size:18px;line-height:18px;color:rgb(204,204,220);-webkit-text-stroke:0.35px rgb(204,204,220);letter-spacing:0.4px;">03/04</div>
</body></html>
